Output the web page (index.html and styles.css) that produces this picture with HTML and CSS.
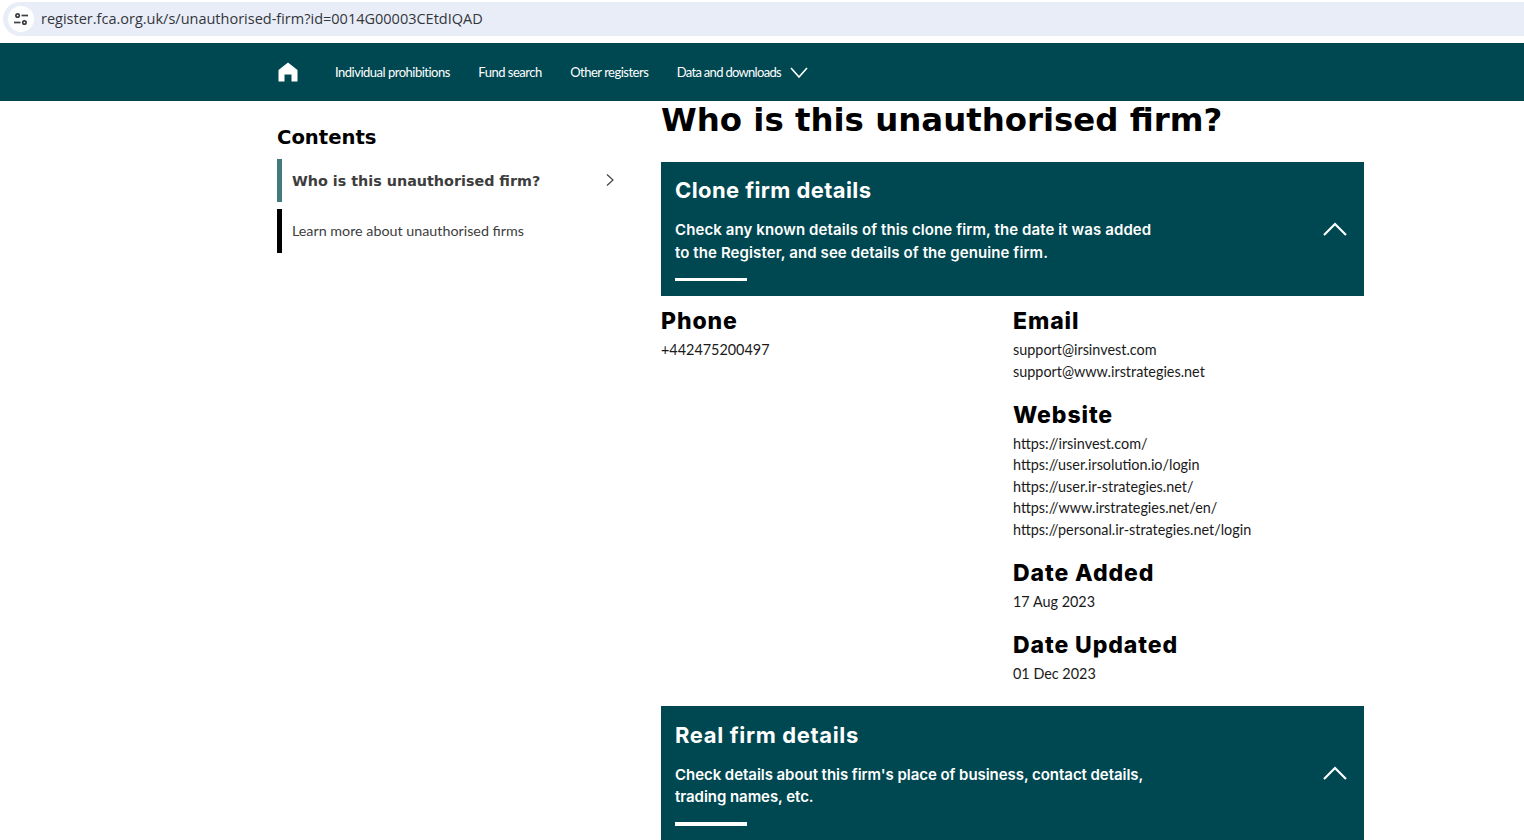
FILE: index.html
```html
<!DOCTYPE html>
<html>
<head>
	<title>Who is this unauthorised firm?</title>
	<link rel="stylesheet" href="styles.css">
</head>
<body>
	<div class="address-bar">
		<span class="site-icon">
			<svg width="16" height="16" viewBox="0 0 16 16" fill="none" stroke="#3c4043" stroke-width="1.700">
				<circle cx="4.600" cy="4.500" r="1.700"/>
				<path d="M8.500 4.500H15"/>
				<path d="M1 11.500H7.500"/>
				<circle cx="11.400" cy="11.500" r="1.700"/>
			</svg>
		</span>
		<span class="url">register.fca.org.uk/s/unauthorised-firm?id=0014G00003CEtdIQAD</span>
	</div>

	<nav class="topnav">
		<a class="home" href="#">
			<svg width="20" height="20" viewBox="0 0 20 20" fill="#fff">
				<path d="M10 .5 19.500 8V19.500H13.500V12.500H6.500V19.500H.5V8Z"/>
			</svg>
		</a>
		<a href="#">Individual prohibitions</a>
		<a href="#">Fund search</a>
		<a href="#">Other registers</a>
		<a class="has-menu" href="#">Data and downloads
			<svg width="18" height="11" viewBox="0 0 18 11" fill="none" stroke="#fff" stroke-width="1.600">
				<path d="M1 1 9 10 17 1"/>
			</svg>
		</a>
	</nav>

	<div class="page">
		<aside class="sidebar">
			<h2>Contents</h2>
			<a class="side-link active" href="#">
				<span>Who is this unauthorised firm?</span>
				<svg width="8" height="12" viewBox="0 0 8 12" fill="none" stroke="#444" stroke-width="1.200">
					<path d="M1 .5 7 6 1 11.500"/>
				</svg>
			</a>
			<a class="side-link" href="#"><span>Learn more about unauthorised firms</span></a>
		</aside>

		<main class="content">
			<h1>Who is this unauthorised firm?</h1>

			<section class="panel panel-clone">
				<div>
					<h2>Clone firm details</h2>
					<p>Check any known details of this clone firm, the date it was added to the Register, and see details of the genuine firm.</p>
					<div class="rule"></div>
				</div>
				<svg class="chevron" width="24" height="14" viewBox="0 0 24 14" fill="none" stroke="#fff" stroke-width="2.200">
					<path d="M1 13 12 2 23 13"/>
				</svg>
			</section>

			<div class="details">
				<div class="field">
					<h3>Phone</h3>
					<ul>
						<li>+442475200497</li>
					</ul>
				</div>
				<div>
					<div class="field">
						<h3>Email</h3>
						<ul>
							<li>support@irsinvest.com</li>
							<li>support@www.irstrategies.net</li>
						</ul>
					</div>
					<div class="field">
						<h3>Website</h3>
						<ul>
							<li>https://irsinvest.com/</li>
							<li>https://user.irsolution.io/login</li>
							<li>https://user.ir-strategies.net/</li>
							<li>https://www.irstrategies.net/en/</li>
							<li>https://personal.ir-strategies.net/login</li>
						</ul>
					</div>
					<div class="field">
						<h3>Date Added</h3>
						<ul>
							<li>17 Aug 2023</li>
						</ul>
					</div>
					<div class="field">
						<h3>Date Updated</h3>
						<ul>
							<li>01 Dec 2023</li>
						</ul>
					</div>
				</div>
			</div>

			<section class="panel panel-real">
				<div>
					<h2>Real firm details</h2>
					<p>Check details about this firm's place of business, contact details, trading names, etc.</p>
					<div class="rule"></div>
				</div>
				<svg class="chevron" width="24" height="14" viewBox="0 0 24 14" fill="none" stroke="#fff" stroke-width="2.200">
					<path d="M1 13 12 2 23 13"/>
				</svg>
			</section>
		</main>
	</div>
</body>
</html>
```

FILE: styles.css
```css
html, body {
	margin: 0;
	height: 840px;
	overflow: hidden;
	background: #fff;
}

body {
	font-family: "Lato", sans-serif;
	color: #000;
}

a {
	color: inherit;
	text-decoration: none;
}

.address-bar {
	display: flex;
	align-items: center;
	height: 34px;
	margin: 2px 0 7px 3px;
	background: #e9edf8;
	border-radius: 17px 0 0 17px;
}

.site-icon {
	display: flex;
	align-items: center;
	justify-content: center;
	width: 26px;
	height: 26px;
	margin-left: 5px;
	border-radius: 50%;
	background: #fff;
}

.url {
	margin: -2px 0 0 7px;
	font-family: "Open Sans", sans-serif;
	font-size: 14.5px;
	color: #33363b;
}

.topnav {
	display: flex;
	align-items: center;
	height: 58px;
	padding-left: 278px;
	background: #004851;
	color: #fff;
	font-size: 13px;
	letter-spacing: -0.5px;
}

.topnav a {
	margin-right: 28.5px;
}

.topnav .home {
	display: flex;
	margin-right: 37px;
}

.topnav .has-menu {
	display: flex;
	align-items: center;
	gap: 9px;
	letter-spacing: -0.7px;
}

.page {
	display: flex;
	padding-left: 277px;
}

.sidebar {
	width: 384px;
	flex-shrink: 0;
	padding-top: 25px;
}

.sidebar h2 {
	margin: 0 0 9px;
	font-family: "DejaVu Sans", sans-serif;
	font-size: 19.6px;
	line-height: 24px;
}

.side-link {
	display: flex;
	align-items: center;
	justify-content: space-between;
	width: 337px;
	height: 44px;
	margin-bottom: 7px;
	padding: 0 0 2px 10px;
	box-sizing: border-box;
	border-left: 5px solid #000;
	font-size: 14.3px;
	color: #3d3d3d;
}

.side-link.active {
	height: 43px;
	padding-bottom: 0;
	border-left-color: #437a80;
	font-family: "DejaVu Sans", sans-serif;
	font-weight: bold;
	font-size: 14.33px;
}

.side-link svg {
	margin-top: -2px;
}

.content {
	width: 703px;
}

.content h1 {
	margin: 0 0 23px;
	font-family: "DejaVu Sans", sans-serif;
	font-size: 32.4px;
	line-height: 38px;
}

.panel {
	display: flex;
	justify-content: space-between;
	align-items: center;
	padding: 14px 17px 15px 14px;
	background: #004851;
	color: #fff;
}

.panel h2 {
	margin: 0 0 15px;
	font-family: "Inter", sans-serif;
	font-size: 22px;
	line-height: 28px;
	font-weight: 700;
}

.panel p {
	width: 480px;
	margin: 0 0 14px;
	font-family: "Inter", sans-serif;
	font-size: 15px;
	line-height: 22.5px;
	font-weight: 600;
}

.panel-clone h2 {
	letter-spacing: 0.4px;
}

.panel-clone p {
	letter-spacing: 0.1px;
}

.panel-real {
	padding-top: 15px;
}

.panel-real h2 {
	letter-spacing: 0.65px;
}

.panel-real p {
	margin-bottom: 13px;
	letter-spacing: -0.05px;
}

.panel-real .rule {
	height: 4px;
}

.rule {
	width: 72px;
	height: 3px;
	background: #fff;
}

.chevron {
	flex-shrink: 0;
}

.details {
	display: grid;
	grid-template-columns: 352px 1fr;
	padding: 11px 0 21px;
}

.field {
	margin-bottom: 18.7px;
}

.field:last-child {
	margin-bottom: 0;
}

.field h3 {
	margin: 0 0 4px;
	font-family: "Inter", sans-serif;
	font-size: 23px;
	line-height: 28px;
	font-weight: 800;
	letter-spacing: 0.9px;
}

.field ul {
	margin: 0;
	padding: 0;
	list-style: none;
}

.field li {
	font-size: 14.4px;
	line-height: 21.5px;
	color: #1a1a1a;
}
```
